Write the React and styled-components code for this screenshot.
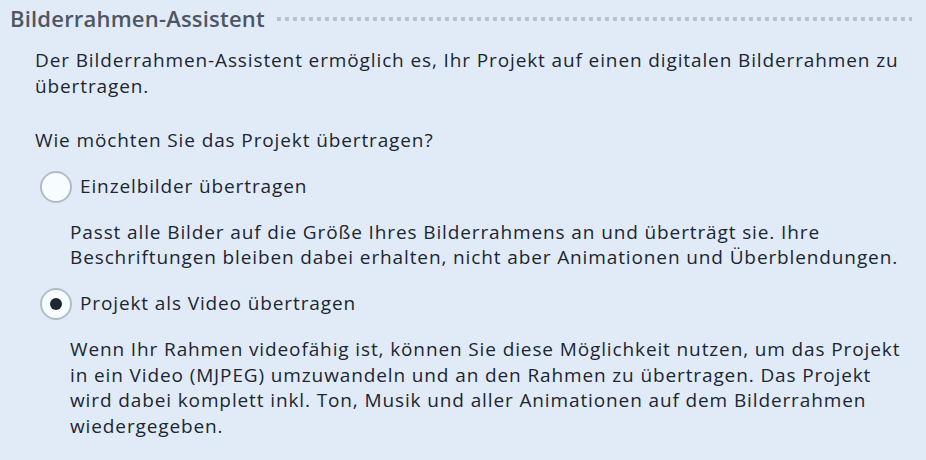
import React from "react";
import styled, { createGlobalStyle } from "styled-components";

const Global = createGlobalStyle`
  html, body { margin: 0; padding: 0; background: #e1ebf8; }
  body { font-family: "Open Sans", "Noto Sans", sans-serif; }
`;

const Page = styled.div`
  width: 926px;
  height: 460px;
  overflow: hidden;
  background: #e1ebf8;
  color: #1c2532;
  font-size: 19px;
  letter-spacing: 0.88px;
  line-height: 25.6px;
`;

const TitleRow = styled.div`
  display: flex;
  align-items: center;
  gap: 12px;
  height: 36px;
  padding: 0 14px 0 10px;
`;

const Title = styled.h1`
  margin: 0;
  font-size: 22px;
  font-weight: 600;
  letter-spacing: 0.2px;
  color: #4e5664;
  white-space: nowrap;
  line-height: 36px;
`;

const Dots = styled.div`
  flex: 1;
  height: 4px;
  margin-top: 1px;
  background-image: linear-gradient(to right, #b8c0cc 4px, transparent 4px);
  background-size: 8px 4px;
  background-repeat: repeat-x;
`;

const Content = styled.div`
  padding: 12px 0 0 35px;
  display: flex;
  flex-direction: column;
`;

const Para = styled.p`
  margin: 0 0 ${(p) => p.$after || 0}px 0;
  white-space: nowrap;
`;

const Options = styled.div`
  display: flex;
  flex-direction: column;
  gap: 17px;
  margin-top: 17px;
`;

const RadioRow = styled.label`
  display: flex;
  align-items: center;
  gap: 8px;
  margin-left: 5px;
`;

const Circle = styled.span`
  box-sizing: border-box;
  width: 32px;
  height: 32px;
  border-radius: 50%;
  border: 2px solid #b3bac5;
  background: #f7fdff;
  display: flex;
  align-items: center;
  justify-content: center;
  &::after {
    content: "";
    width: 12px;
    height: 12px;
    border-radius: 50%;
    background: ${(p) => (p.$checked ? "#1f2733" : "transparent")};
  }
`;

const Desc = styled.p`
  margin: 0 0 0 35px;
  white-space: nowrap;
`;

export default function App() {
  return (
    <Page>
      <Global />
      <TitleRow>
        <Title>Bilderrahmen-Assistent</Title>
        <Dots />
      </TitleRow>
      <Content>
        <Para $after={29}>
          Der Bilderrahmen-Assistent ermöglich es, Ihr Projekt auf einen digitalen Bilderrahmen zu
          <br />
          übertragen.
        </Para>
        <Para>Wie möchten Sie das Projekt übertragen?</Para>
        <Options>
          <RadioRow>
            <Circle />
            Einzelbilder übertragen
          </RadioRow>
          <Desc>
            Passt alle Bilder auf die Größe Ihres Bilderrahmens an und überträgt sie. Ihre
            <br />
            Beschriftungen bleiben dabei erhalten, nicht aber Animationen und Überblendungen.
          </Desc>
          <RadioRow>
            <Circle $checked />
            Projekt als Video übertragen
          </RadioRow>
          <Desc>
            Wenn Ihr Rahmen videofähig ist, können Sie diese Möglichkeit nutzen, um das Projekt
            <br />
            in ein Video (MJPEG) umzuwandeln und an den Rahmen zu übertragen. Das Projekt
            <br />
            wird dabei komplett inkl. Ton, Musik und aller Animationen auf dem Bilderrahmen
            <br />
            wiedergegeben.
          </Desc>
        </Options>
      </Content>
    </Page>
  );
}
